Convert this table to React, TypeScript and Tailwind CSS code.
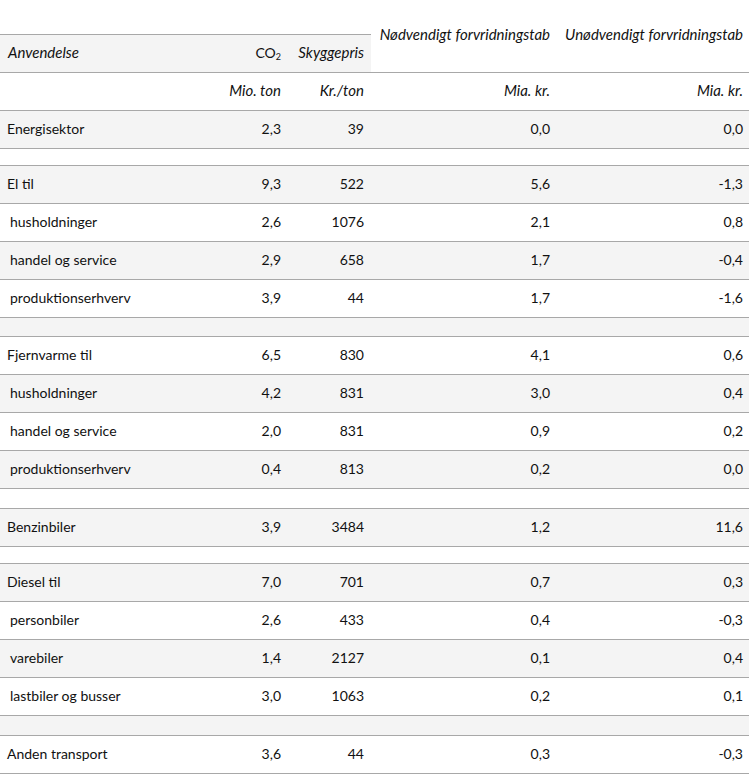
import React from "react";

type Row =
  | { kind: "data"; label: string; sub?: boolean; co2: string; price: string; nec: string; unnec: string }
  | { kind: "gap"; h: string };

const rows: Row[] = [
  { kind: "data", label: "Energisektor", co2: "2,3", price: "39", nec: "0,0", unnec: "0,0" },
  { kind: "gap", h: "h-[16px]" },
  { kind: "data", label: "El til", co2: "9,3", price: "522", nec: "5,6", unnec: "-1,3" },
  { kind: "data", label: "husholdninger", sub: true, co2: "2,6", price: "1076", nec: "2,1", unnec: "0,8" },
  { kind: "data", label: "handel og service", sub: true, co2: "2,9", price: "658", nec: "1,7", unnec: "-0,4" },
  { kind: "data", label: "produktionserhverv", sub: true, co2: "3,9", price: "44", nec: "1,7", unnec: "-1,6" },
  { kind: "gap", h: "h-[18px]" },
  { kind: "data", label: "Fjernvarme til", co2: "6,5", price: "830", nec: "4,1", unnec: "0,6" },
  { kind: "data", label: "husholdninger", sub: true, co2: "4,2", price: "831", nec: "3,0", unnec: "0,4" },
  { kind: "data", label: "handel og service", sub: true, co2: "2,0", price: "831", nec: "0,9", unnec: "0,2" },
  { kind: "data", label: "produktionserhverv", sub: true, co2: "0,4", price: "813", nec: "0,2", unnec: "0,0" },
  { kind: "gap", h: "h-[19px]" },
  { kind: "data", label: "Benzinbiler", co2: "3,9", price: "3484", nec: "1,2", unnec: "11,6" },
  { kind: "gap", h: "h-[16px]" },
  { kind: "data", label: "Diesel til", co2: "7,0", price: "701", nec: "0,7", unnec: "0,3" },
  { kind: "data", label: "personbiler", sub: true, co2: "2,6", price: "433", nec: "0,4", unnec: "-0,3" },
  { kind: "data", label: "varebiler", sub: true, co2: "1,4", price: "2127", nec: "0,1", unnec: "0,4" },
  { kind: "data", label: "lastbiler og busser", sub: true, co2: "3,0", price: "1063", nec: "0,2", unnec: "0,1" },
  { kind: "gap", h: "h-[19px]" },
  { kind: "data", label: "Anden transport", co2: "3,6", price: "44", nec: "0,3", unnec: "-0,3" },
];

const cols = "grid grid-cols-[224px_64px_83px_186px_192px]";

const App: React.FC = () => {
  return (
    <div
      className="w-[749px] bg-white text-[14px] text-[#111111]"
      style={{ fontFamily: "Lato, 'Open Sans', sans-serif" }}
    >
      {/* header */}
      <div className={`${cols} h-[73px] border-b border-[#a8a8a8]`}>
        <div className="col-span-3 pt-[34px]">
          <div className="grid grid-cols-[224px_64px_83px] h-[38px] pb-[2px] border-t border-[#a8a8a8] bg-[#f4f4f4] items-center italic text-[15px]">
            <span className="pl-[8px]">Anvendelse</span>
            <span className="pr-[7px] text-right not-italic text-[14px]">
              CO<sub className="text-[9px]">2</sub>
            </span>
            <span className="pr-[7px] text-right">Skyggepris</span>
          </div>
        </div>
        <div className="pt-[23px] pr-[7px] text-right italic text-[15px] whitespace-nowrap">Nødvendigt forvridningstab</div>
        <div className="pt-[23px] pr-[6px] text-right italic text-[15px] whitespace-nowrap">Unødvendigt forvridningstab</div>
      </div>

      {/* units */}
      <div className={`${cols} h-[38px] pb-[2px] border-b border-[#a8a8a8] items-center italic text-[15px] bg-white`}>
        <span />
        <span className="pr-[7px] text-right">Mio. ton</span>
        <span className="pr-[7px] text-right">Kr./ton</span>
        <span className="pr-[7px] text-right">Mia. kr.</span>
        <span className="pr-[6px] text-right">Mia. kr.</span>
      </div>

      {rows.map((r, i) => {
        const shade = i % 2 === 0 ? "bg-[#f4f4f4]" : "bg-white";
        if (r.kind === "gap") {
          return <div key={i} className={`${r.h} box-content border-b border-[#a8a8a8] ${shade}`} />;
        }
        return (
          <div key={i} className={`${cols} h-[38px] pb-[2px] border-b border-[#a8a8a8] items-center ${shade}`}>
            <span className={r.sub ? "pl-[10px]" : "pl-[7px]"}>{r.label}</span>
            <span className="pr-[7px] text-right">{r.co2}</span>
            <span className="pr-[7px] text-right">{r.price}</span>
            <span className="pr-[7px] text-right">{r.nec}</span>
            <span className="pr-[6px] text-right">{r.unnec}</span>
          </div>
        );
      })}
    </div>
  );
};

export default App;
